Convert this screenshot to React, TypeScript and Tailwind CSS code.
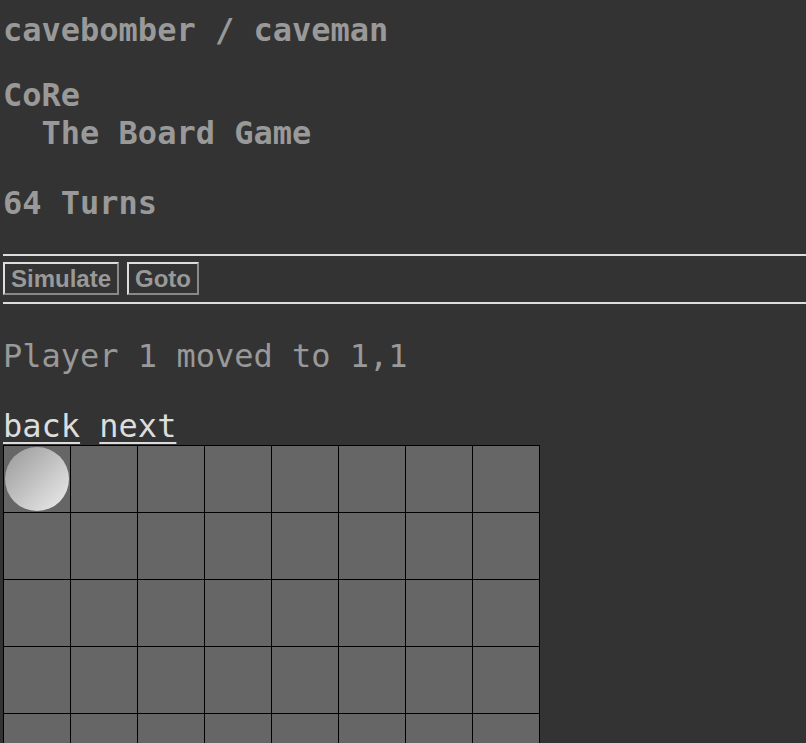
import React from "react";

const mono = { fontFamily: '"DejaVu Sans Mono", monospace' };

export default function App() {
  const rows = Array.from({ length: 8 }, (_, r) => r);
  const cols = Array.from({ length: 8 }, (_, c) => c);
  return (
    <div className="min-h-[743px] bg-[#333333] pl-[3px] text-[#999999]" style={mono}>
      <div className="pt-[11px] text-[32px] leading-[38px] font-bold font-['DejaVu_Sans_Mono',monospace]">
        cavebomber / caveman
      </div>
      <div className="mt-[27px] text-[32px] leading-[38px] font-bold font-['DejaVu_Sans_Mono',monospace] whitespace-pre">
        {"CoRe\n  The Board Game"}
      </div>
      <div className="mt-[32px] text-[32px] leading-[38px] font-bold font-['DejaVu_Sans_Mono',monospace]">
        64 Turns
      </div>
      <div className="mt-[32px] h-[2px] bg-[#dddddd]" />
      <div className="mt-[6px] flex gap-[8px]">
        <button className="h-[33px] px-[6px] border-2 border-t-[#dddddd] border-l-[#dddddd] border-r-[#888888] border-b-[#888888] bg-transparent text-[24px] leading-[27px] font-bold text-[#999999] font-['Liberation_Sans',Arial,sans-serif]">
          Simulate
        </button>
        <button className="h-[33px] px-[6px] border-2 border-t-[#dddddd] border-l-[#dddddd] border-r-[#888888] border-b-[#888888] bg-transparent text-[24px] leading-[27px] font-bold text-[#999999] font-['Liberation_Sans',Arial,sans-serif]">
          Goto
        </button>
      </div>
      <div className="mt-[7px] h-[2px] bg-[#dddddd]" />
      <div className="mt-[33px] text-[32px] leading-[38px] font-['DejaVu_Sans_Mono',monospace] text-[#999999]">
        Player 1 moved to 1,1
      </div>
      <div className="mt-[32px] flex text-[32px] leading-[38px] font-['DejaVu_Sans_Mono',monospace] text-[#dddddd]">
        <a href="#" className="underline underline-offset-[5px] decoration-2">back</a>
        <span className="whitespace-pre"> </span>
        <a href="#" className="underline underline-offset-[5px] decoration-2">next</a>
      </div>
      <div className="grid w-[537px] grid-cols-[repeat(8,67px)] border-l border-t border-black">
        {rows.map((r) =>
          cols.map((c) => (
            <div
              key={`${r}-${c}`}
              className="flex h-[67px] w-[67px] items-center justify-center border-b border-r border-black bg-[#666666]"
            >
              {r === 0 && c === 0 ? (
                <div className="h-[64px] w-[64px] rounded-full bg-gradient-to-br from-[#999999] to-[#eeeeee]" />
              ) : null}
            </div>
          ))
        )}
      </div>
    </div>
  );
}
